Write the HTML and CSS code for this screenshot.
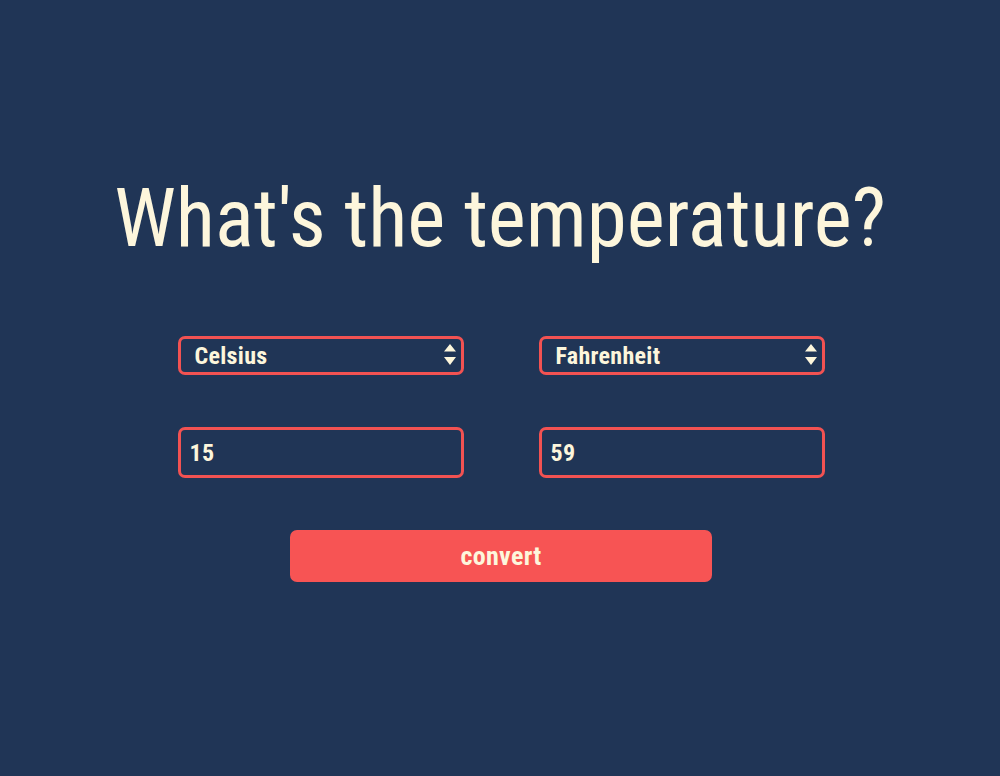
FILE: index.html
```html
<!DOCTYPE html>
<html lang="en">
<head>
<meta charset="utf-8">
<title>Temperature converter</title>
<link rel="stylesheet" href="styles.css">
</head>
<body>
<main class="page">
  <h1 class="title">What's the temperature?</h1>
  <form class="converter">
    <div class="grid">
      <div class="select-wrap">
        <select class="field select">
          <option>Celsius</option>
          <option>Fahrenheit</option>
          <option>Kelvin</option>
        </select>
        <svg class="arrows" width="12" height="22" viewBox="0 0 12 22"><path d="M6 0 L12 7.5 L0 7.5 Z M0 13 L12 13 L6 21 Z" fill="#fdf6dc"/></svg>
      </div>
      <div class="select-wrap">
        <select class="field select">
          <option>Fahrenheit</option>
          <option>Celsius</option>
          <option>Kelvin</option>
        </select>
        <svg class="arrows" width="12" height="22" viewBox="0 0 12 22"><path d="M6 0 L12 7.5 L0 7.5 Z M0 13 L12 13 L6 21 Z" fill="#fdf6dc"/></svg>
      </div>
      <input class="field input" type="text" value="15">
      <input class="field input" type="text" value="59">
    </div>
    <button class="button" type="button">convert</button>
  </form>
</main>
</body>
</html>
```
FILE: styles.css
```css
html, body {
  margin: 0;
  padding: 0;
  background: #203556;
  height: 100%;
}
body {
  font-family: Roboto, "Liberation Sans", sans-serif;
  color: #fdf6dc;
}
.page {
  display: flex;
  flex-direction: column;
  align-items: center;
  padding-top: 172px;
}
.title {
  margin: 0;
  font-size: 81px;
  font-weight: 400;
  line-height: 94px;
  font-stretch: condensed;
  white-space: nowrap;
}
.converter {
  display: flex;
  flex-direction: column;
  align-items: center;
  margin-top: 70px;
  margin-left: 2px;
}
.grid {
  display: grid;
  grid-template-columns: 286px 286px;
  column-gap: 75px;
  row-gap: 52px;
}
.select-wrap {
  position: relative;
}
.field {
  box-sizing: border-box;
  width: 100%;
  background: transparent;
  color: #fdf6dc;
  border: 3px solid #f25252;
  border-radius: 7px;
  font-family: Roboto, "Liberation Sans", sans-serif;
  font-stretch: condensed;
  font-weight: 700;
  font-size: 24px;
  letter-spacing: 0.3px;
  outline: none;
  margin: 0;
}
.select {
  appearance: none;
  -webkit-appearance: none;
  height: 39px;
  padding: 0 0 0 14px;
}
.select option {
  color: #203556;
}
.arrows {
  position: absolute;
  right: 8px;
  top: 8px;
  pointer-events: none;
}
.input {
  height: 51px;
  padding: 0 9px;
}
.button {
  margin-top: 52px;
  width: 422px;
  height: 52px;
  border: none;
  border-radius: 7px;
  background: #f75454;
  color: #fdf6dc;
  font-family: Roboto, "Liberation Sans", sans-serif;
  font-stretch: condensed;
  font-weight: 700;
  font-size: 26px;
  letter-spacing: 0.3px;
  cursor: pointer;
}
```
